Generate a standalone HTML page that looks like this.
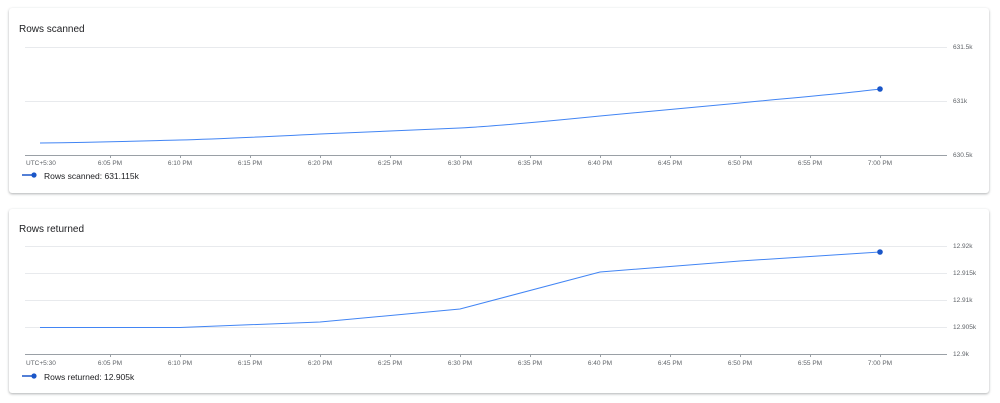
<!DOCTYPE html><html><head><style>
body{margin:0;width:1000px;height:403px;background:#fff;font-family:"Liberation Sans",Arial,sans-serif;overflow:hidden;position:relative}
.card{position:absolute;left:9px;width:980px;background:#fff;border-radius:3px;box-shadow:0 1px 2px rgba(60,64,67,.3),0 1px 3px rgba(60,64,67,.12)}
svg{position:absolute;left:0;top:0}
</style></head><body>
<div class="card" style="top:8px;height:185px"></div>
<div class="card" style="top:209px;height:184px"></div>
<svg width="1000" height="403" font-family="Liberation Sans,Arial,sans-serif">
<text x="19" y="32" font-size="10" fill="#202124">Rows scanned</text>
<g stroke="#e8eaed" stroke-width="1"><line x1="25" y1="47.5" x2="947" y2="47.5"/><line x1="25" y1="101.5" x2="947" y2="101.5"/></g>
<line x1="25" y1="155.5" x2="947" y2="155.5" stroke="#9aa0a6"/>
<g stroke="#9aa0a6"><path d="M110.5 155v3M180.5 155v3M250.5 155v3M320.5 155v3M390.5 155v3M460.5 155v3M530.5 155v3M600.5 155v3M670.5 155v3M740.5 155v3M810.5 155v3M880.5 155v3"/></g>
<g font-size="6.5" fill="#5f6368"><text x="953" y="49">631.5k</text><text x="953" y="103">631k</text><text x="953" y="157">630.5k</text></g>
<text x="26" y="165" font-size="6.5" fill="#5f6368">UTC+5:30</text>
<g font-size="6.5" fill="#5f6368" text-anchor="middle">
<text x="110" y="165">6:05 PM</text><text x="180" y="165">6:10 PM</text><text x="250" y="165">6:15 PM</text><text x="320" y="165">6:20 PM</text><text x="390" y="165">6:25 PM</text><text x="460" y="165">6:30 PM</text><text x="530" y="165">6:35 PM</text><text x="600" y="165">6:40 PM</text><text x="670" y="165">6:45 PM</text><text x="740" y="165">6:50 PM</text><text x="810" y="165">6:55 PM</text><text x="880" y="165">7:00 PM</text></g>
<path d="M40 143 C110 142 140 141 180 140 S280 136 320 134 S420 130 460 128 S560 120 600 116 S700 107 740 103 S840 94 880 89" fill="none" stroke="#4285f4" stroke-width="1"/>
<circle cx="880" cy="89" r="2.8" fill="#1a56c8"/>
<line x1="22" y1="175" x2="34" y2="175" stroke="#1a56c8" stroke-width="1.5"/><circle cx="34" cy="175" r="2.6" fill="#1a56c8"/>
<text x="44" y="179" font-size="8.5" fill="#202124">Rows scanned:  631.115k</text>

<text x="19" y="232" font-size="10" fill="#202124">Rows returned</text>
<g stroke="#e8eaed"><line x1="25" y1="246.5" x2="947" y2="246.5"/><line x1="25" y1="273.5" x2="947" y2="273.5"/><line x1="25" y1="300.5" x2="947" y2="300.5"/><line x1="25" y1="327.5" x2="947" y2="327.5"/></g>
<line x1="25" y1="354.5" x2="947" y2="354.5" stroke="#9aa0a6"/>
<g stroke="#9aa0a6"><path d="M110.5 354v3M180.5 354v3M250.5 354v3M320.5 354v3M390.5 354v3M460.5 354v3M530.5 354v3M600.5 354v3M670.5 354v3M740.5 354v3M810.5 354v3M880.5 354v3"/></g>
<g font-size="6.5" fill="#5f6368"><text x="953" y="248">12.92k</text><text x="953" y="275">12.915k</text><text x="953" y="302">12.91k</text><text x="953" y="329">12.905k</text><text x="953" y="356">12.9k</text></g>
<text x="26" y="365" font-size="6.5" fill="#5f6368">UTC+5:30</text>
<g font-size="6.5" fill="#5f6368" text-anchor="middle">
<text x="110" y="365">6:05 PM</text><text x="180" y="365">6:10 PM</text><text x="250" y="365">6:15 PM</text><text x="320" y="365">6:20 PM</text><text x="390" y="365">6:25 PM</text><text x="460" y="365">6:30 PM</text><text x="530" y="365">6:35 PM</text><text x="600" y="365">6:40 PM</text><text x="670" y="365">6:45 PM</text><text x="740" y="365">6:50 PM</text><text x="810" y="365">6:55 PM</text><text x="880" y="365">7:00 PM</text></g>
<path d="M40 327.5 L180 327.5 L320 322 L460 309 L600 272 L740 261 L880 252" fill="none" stroke="#4285f4" stroke-width="1"/>
<circle cx="880" cy="252" r="2.8" fill="#1a56c8"/>
<line x1="22" y1="376" x2="34" y2="376" stroke="#1a56c8" stroke-width="1.5"/><circle cx="34" cy="376" r="2.6" fill="#1a56c8"/>
<text x="44" y="380" font-size="8.5" fill="#202124">Rows returned:  12.905k</text>
</svg>
</body></html>
